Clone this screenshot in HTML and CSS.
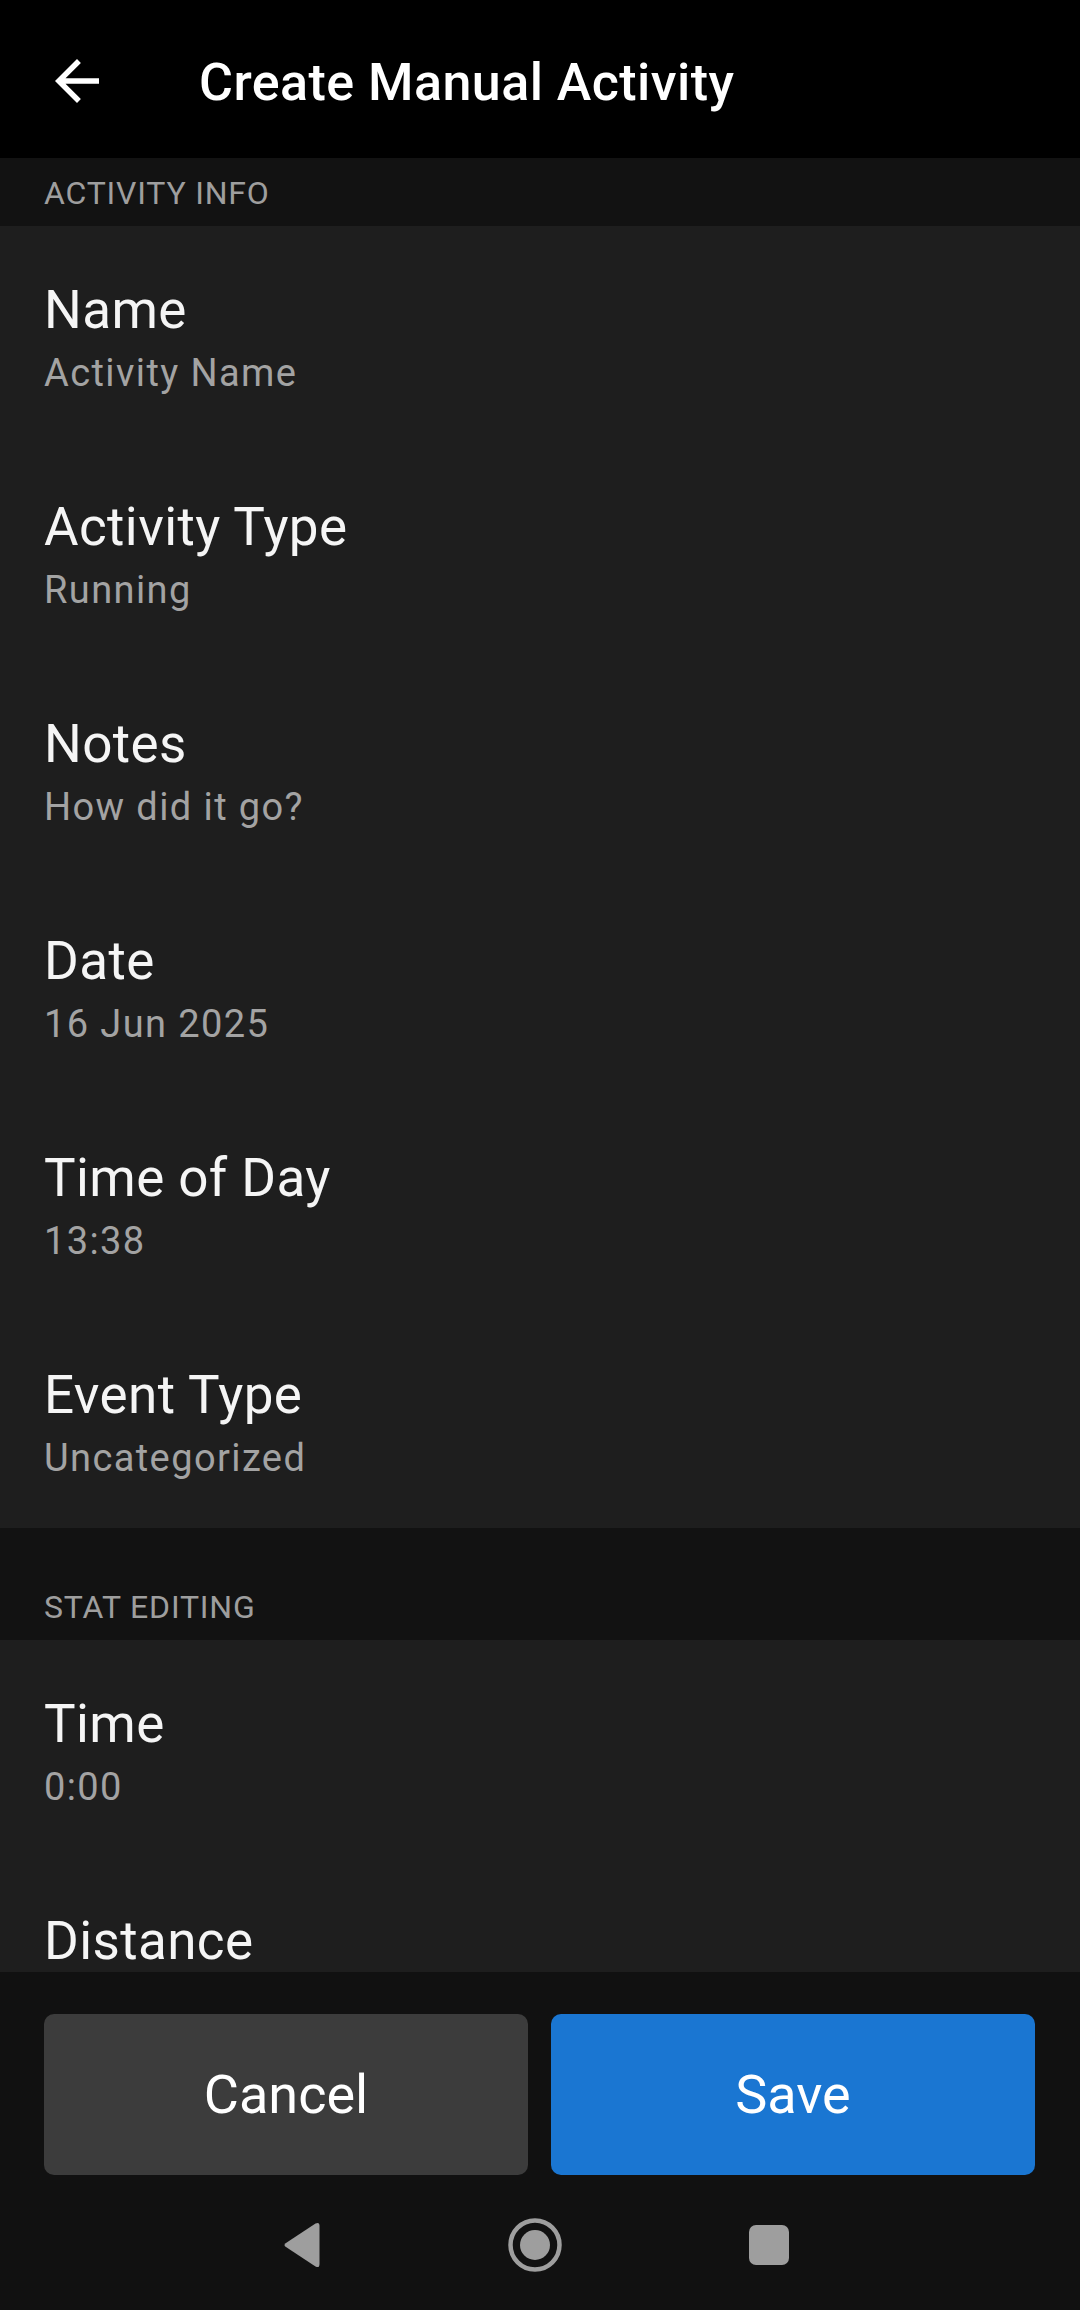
FILE: index.html
```html
<!DOCTYPE html>
<html>
<head>
<meta charset="utf-8">
<link rel="stylesheet" href="styles.css">
</head>
<body>
<div class="screen">
  <header class="appbar">
    <div class="back">
      <svg viewBox="0 0 24 24" width="66" height="66"><path d="M20 11H7.83l5.59-5.59L12 4l-8 8 8 8 1.41-1.41L7.83 13H20v-2z" fill="#ffffff"/></svg>
    </div>
    <h1 class="title">Create Manual Activity</h1>
  </header>
  <main class="content">
    <div class="section-head first">ACTIVITY INFO</div>
    <div class="item"><div class="label">Name</div><div class="value">Activity Name</div></div>
    <div class="item"><div class="label">Activity Type</div><div class="value">Running</div></div>
    <div class="item"><div class="label">Notes</div><div class="value">How did it go?</div></div>
    <div class="item"><div class="label">Date</div><div class="value">16 Jun 2025</div></div>
    <div class="item"><div class="label">Time of Day</div><div class="value">13:38</div></div>
    <div class="item"><div class="label">Event Type</div><div class="value">Uncategorized</div></div>
    <div class="section-head">STAT EDITING</div>
    <div class="item"><div class="label">Time</div><div class="value">0:00</div></div>
    <div class="item"><div class="label">Distance</div></div>
  </main>
  <footer class="bottom">
    <div class="buttons">
      <button class="btn cancel">Cancel</button>
      <button class="btn save">Save</button>
    </div>
    <nav class="navbar">
      <div class="slot">
        <svg viewBox="0 0 37 46" width="37" height="46"><path d="M32.5 1.6 L2.6 21.2 Q0.4 23 2.6 24.8 L32.5 44.4 Q36.5 46.6 36.5 42 L36.5 4 Q36.5 -0.6 32.5 1.6 Z" fill="#9e9e9e"/></svg>
      </div>
      <div class="slot">
        <svg viewBox="0 0 54 54" width="54" height="54"><circle cx="27" cy="27" r="24.5" fill="none" stroke="#9e9e9e" stroke-width="4.5"/><circle cx="27" cy="27" r="15" fill="#9e9e9e"/></svg>
      </div>
      <div class="slot">
        <div class="nav-recent"></div>
      </div>
    </nav>
  </footer>
</div>
</body>
</html>
```
FILE: styles.css
```css
* { box-sizing: border-box; }
html, body { margin: 0; padding: 0; background: #111111; }
body { font-family: Roboto, "Noto Sans", sans-serif; }
.screen {
  width: 1080px;
  height: 2310px;
  display: flex;
  flex-direction: column;
  overflow: hidden;
}
.appbar {
  height: 158px;
  flex: none;
  background: #000000;
  display: flex;
  align-items: center;
  padding-left: 44px;
}
.back {
  width: 66px;
  height: 66px;
  display: flex;
  margin-top: 4px;
}
.title {
  margin: 8px 0 0 89px;
  color: #ffffff;
  font-size: 52px;
  font-weight: 500;
  line-height: 62px;
  letter-spacing: 0.45px;
}
.content {
  flex: 1;
  overflow: hidden;
  background: #1e1e1e;
}
.section-head {
  background: #121212;
  color: #9e9e9e;
  font-size: 32px;
  line-height: 36px;
  letter-spacing: 0.8px;
  padding: 61px 44px 15px;
}
.section-head.first { padding-top: 17px; }
.item {
  background: #1e1e1e;
  padding: 53px 44px 47px;
  height: 217px;
}
.label {
  color: #f5f5f5;
  font-size: 53px;
  line-height: 62px;
  letter-spacing: 0.4px;
}
.value {
  color: #a3a3a3;
  font-size: 38px;
  line-height: 45px;
  letter-spacing: 1.4px;
  margin-top: 10px;
}
.bottom {
  flex: none;
  height: 338px;
  background: #111111;
  display: flex;
  flex-direction: column;
}
.buttons {
  display: flex;
  gap: 23px;
  padding: 42px 45px 0 44px;
}
.btn {
  flex: 1;
  height: 161px;
  border: none;
  border-radius: 10px;
  color: #ffffff;
  font-family: Roboto, sans-serif;
  font-size: 54px;
  font-weight: 400;
}
.cancel { background: #3c3c3c; }
.save { background: #1a76d2; }
.navbar {
  flex: 1;
  display: flex;
  align-items: center;
  justify-content: center;
  padding: 4px 10px 0 0;
}
.slot {
  width: 234px;
  display: flex;
  justify-content: center;
  align-items: center;
}
.nav-recent {
  width: 40px;
  height: 40px;
  border-radius: 7px;
  background: #9e9e9e;
}
```
